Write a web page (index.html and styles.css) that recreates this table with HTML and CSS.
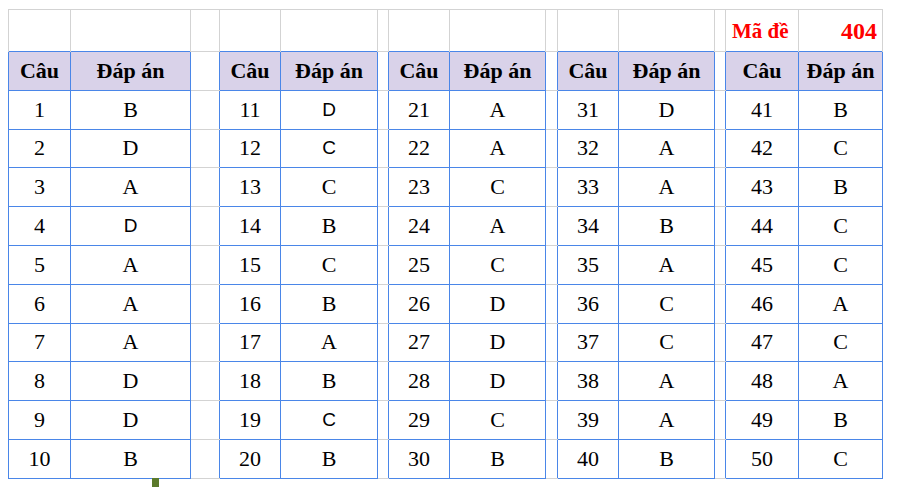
FILE: index.html
```html
<!DOCTYPE html>
<html lang="vi">
<head>
<meta charset="utf-8">
<title>Đáp án</title>
<link rel="stylesheet" href="styles.css">
</head>
<body>
<div class="sheet">
<table class="grid">
<colgroup>
<col class="c1"><col class="c2"><col class="c3"><col class="c4"><col class="c5"><col class="c6"><col class="c7"><col class="c8"><col class="c9"><col class="c10"><col class="c11"><col class="c12"><col class="c13"><col class="c14">
</colgroup>
<tr class="toprow">
<td></td><td></td><td></td><td></td><td></td><td></td><td></td><td></td><td></td><td></td><td></td><td></td>
<td class="ma">Mã đề</td><td class="code">404</td>
</tr>
<tr class="head">
<td class="h">Câu</td><td class="h">Đáp án</td><td class="sp"></td>
<td class="h">Câu</td><td class="h">Đáp án</td><td class="sp"></td>
<td class="h">Câu</td><td class="h">Đáp án</td><td class="sp"></td>
<td class="h">Câu</td><td class="h">Đáp án</td><td class="sp"></td>
<td class="h">Câu</td><td class="h">Đáp án</td>
</tr>
<tr>
<td class="d">1</td><td class="d">B</td><td class="sp"></td>
<td class="d">11</td><td class="d sans">D</td><td class="sp"></td>
<td class="d">21</td><td class="d">A</td><td class="sp"></td>
<td class="d">31</td><td class="d">D</td><td class="sp"></td>
<td class="d">41</td><td class="d">B</td>
</tr>
<tr>
<td class="d">2</td><td class="d">D</td><td class="sp"></td>
<td class="d">12</td><td class="d sans">C</td><td class="sp"></td>
<td class="d">22</td><td class="d">A</td><td class="sp"></td>
<td class="d">32</td><td class="d">A</td><td class="sp"></td>
<td class="d">42</td><td class="d">C</td>
</tr>
<tr>
<td class="d">3</td><td class="d">A</td><td class="sp"></td>
<td class="d">13</td><td class="d">C</td><td class="sp"></td>
<td class="d">23</td><td class="d">C</td><td class="sp"></td>
<td class="d">33</td><td class="d">A</td><td class="sp"></td>
<td class="d">43</td><td class="d">B</td>
</tr>
<tr>
<td class="d">4</td><td class="d sans">D</td><td class="sp"></td>
<td class="d">14</td><td class="d">B</td><td class="sp"></td>
<td class="d">24</td><td class="d">A</td><td class="sp"></td>
<td class="d">34</td><td class="d">B</td><td class="sp"></td>
<td class="d">44</td><td class="d">C</td>
</tr>
<tr>
<td class="d">5</td><td class="d">A</td><td class="sp"></td>
<td class="d">15</td><td class="d">C</td><td class="sp"></td>
<td class="d">25</td><td class="d">C</td><td class="sp"></td>
<td class="d">35</td><td class="d">A</td><td class="sp"></td>
<td class="d">45</td><td class="d">C</td>
</tr>
<tr>
<td class="d">6</td><td class="d">A</td><td class="sp"></td>
<td class="d">16</td><td class="d">B</td><td class="sp"></td>
<td class="d">26</td><td class="d">D</td><td class="sp"></td>
<td class="d">36</td><td class="d">C</td><td class="sp"></td>
<td class="d">46</td><td class="d">A</td>
</tr>
<tr>
<td class="d">7</td><td class="d">A</td><td class="sp"></td>
<td class="d">17</td><td class="d">A</td><td class="sp"></td>
<td class="d">27</td><td class="d">D</td><td class="sp"></td>
<td class="d">37</td><td class="d">C</td><td class="sp"></td>
<td class="d">47</td><td class="d">C</td>
</tr>
<tr>
<td class="d">8</td><td class="d">D</td><td class="sp"></td>
<td class="d">18</td><td class="d">B</td><td class="sp"></td>
<td class="d">28</td><td class="d">D</td><td class="sp"></td>
<td class="d">38</td><td class="d">A</td><td class="sp"></td>
<td class="d">48</td><td class="d">A</td>
</tr>
<tr>
<td class="d">9</td><td class="d">D</td><td class="sp"></td>
<td class="d">19</td><td class="d sans">C</td><td class="sp"></td>
<td class="d">29</td><td class="d">C</td><td class="sp"></td>
<td class="d">39</td><td class="d">A</td><td class="sp"></td>
<td class="d">49</td><td class="d">B</td>
</tr>
<tr>
<td class="d">10</td><td class="d">B</td><td class="sp"></td>
<td class="d">20</td><td class="d">B</td><td class="sp"></td>
<td class="d">30</td><td class="d">B</td><td class="sp"></td>
<td class="d">40</td><td class="d">B</td><td class="sp"></td>
<td class="d">50</td><td class="d">C</td>
</tr>
</table>
<div class="marker"></div>
</div>
</body>
</html>
```

FILE: styles.css
```css
html, body {
  margin: 0;
  padding: 0;
  background: #ffffff;
}
body {
  font-family: "Liberation Serif", "Times New Roman", serif;
  color: #000000;
}
.sheet {
  position: relative;
  padding: 9px 0 0 8px;
  height: 487px;
  box-sizing: border-box;
  overflow: hidden;
}
.grid {
  border-collapse: collapse;
  table-layout: fixed;
  width: 874px;
}
.c1 { width: 62px; }
.c2 { width: 120px; }
.c3 { width: 29px; }
.c4 { width: 61px; }
.c5 { width: 97px; }
.c6 { width: 11px; }
.c7 { width: 61px; }
.c8 { width: 96px; }
.c9 { width: 12px; }
.c10 { width: 61px; }
.c11 { width: 96px; }
.c12 { width: 11px; }
.c13 { width: 73px; }
.c14 { width: 84px; }

.grid tr {
  height: 38.8px;
}
.grid .toprow {
  height: 42px;
}
.grid td {
  padding: 0;
  text-align: center;
  vertical-align: middle;
  font-size: 22px;
  line-height: 24px;
}
.toprow td {
  border: 1px solid #d3d3d3;
  border-bottom: none;
  vertical-align: bottom;
  padding-bottom: 8px;
}
.grid .h {
  border: 1px solid #4a86e8;
  background: #d9d2e9;
  font-weight: bold;
}
.grid .d {
  border: 1px solid #4a86e8;
}
.grid .sp {
  border-top: 1px solid #d3d3d3;
  border-bottom: 1px solid #d3d3d3;
  border-left: none;
  border-right: none;
}
.grid .sans {
  font-family: "Liberation Sans", Arial, sans-serif;
  font-size: 19px;
}
.grid .ma {
  color: #ff0000;
  font-weight: bold;
  font-size: 21px;
  text-align: left;
  padding-left: 6px;
}
.grid .code {
  color: #ff0000;
  font-weight: bold;
  font-size: 24px;
  text-align: right;
  padding-right: 5px;
}
.marker {
  position: absolute;
  left: 152px;
  top: 478px;
  width: 7px;
  height: 9px;
  background: #5b7a2b;
}
```
